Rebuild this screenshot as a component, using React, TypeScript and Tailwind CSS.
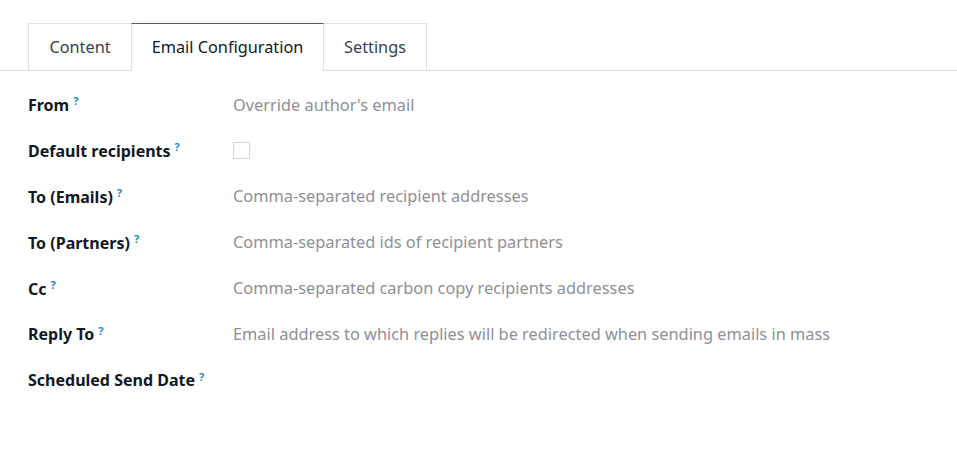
const rows: { label: string; placeholder?: string; checkbox?: boolean }[] = [
  { label: "From", placeholder: "Override author's email" },
  { label: "Default recipients", checkbox: true },
  { label: "To (Emails)", placeholder: "Comma-separated recipient addresses" },
  { label: "To (Partners)", placeholder: "Comma-separated ids of recipient partners" },
  { label: "Cc", placeholder: "Comma-separated carbon copy recipients addresses" },
  { label: "Reply To", placeholder: "Email address to which replies will be redirected when sending emails in mass" },
  { label: "Scheduled Send Date" },
];

const tabs = ["Content", "Email Configuration", "Settings"];

export default function App() {
  return (
    <div className="h-[455px] w-[957px] bg-white font-['Noto_Sans',sans-serif] text-[16px] text-[#212529]">
      <div className="pt-[23px]">
        <div className="flex border-b border-[#dee2e6] pl-[28px]">
          {tabs.map((tab, i) =>
            i === 1 ? (
              <div
                key={tab}
                className="-mb-px flex h-[48px] w-[193px] items-center justify-center border-x border-t border-x-[#dee2e6] border-t-[#714b67] bg-white text-[16.3px] text-[#111827]"
              >
                {tab}
              </div>
            ) : (
              <div
                key={tab}
                className={`flex h-[47px] items-center justify-center border-t border-[#dee2e6] text-[16.3px] text-[#374151] ${
                  i === 0 ? "w-[103px] border-l" : "w-[103px] border-r"
                }`}
              >
                {tab}
              </div>
            )
          )}
        </div>
      </div>
      <div className="pt-[11px]">
        {rows.map((row) => (
          <div key={row.label} className="flex h-[45.9px] items-center pl-[28px]">
            <div className="w-[205px] font-bold text-[#111827]">
              {row.label}
              <sup className="ml-[4px] text-[11px] font-bold text-[#1b8bb8]">?</sup>
            </div>
            {row.placeholder && <div className="text-[16.35px] text-[#8f8f97]">{row.placeholder}</div>}
            {row.checkbox && <div className="h-[17px] w-[17px] border border-[#d6d6d6] bg-white" />}
          </div>
        ))}
      </div>
    </div>
  );
}
